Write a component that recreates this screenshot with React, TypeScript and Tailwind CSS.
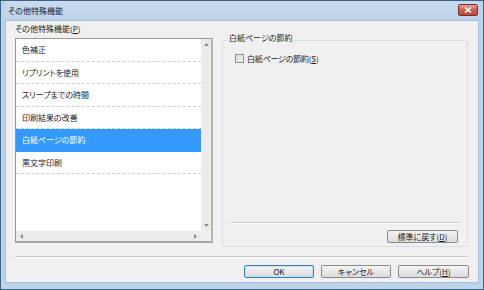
import React from 'react';

const jp = "font-['Meiryo_UI','Noto_Sans_CJK_JP',sans-serif] [font-feature-settings:'palt']";

const items = [
  { label: '色補正', h: 'h-[23px]' },
  { label: 'リプリントを使用', h: 'h-[22px]' },
  { label: 'スリープまでの時間', h: 'h-[23px]' },
  { label: '印刷結果の改善', h: 'h-[22px]' },
  { label: '白紙ページの節約', h: 'h-[23px]', selected: true },
  { label: '黒文字印刷', h: 'h-[22px]' },
];

const Btn: React.FC<{ children: React.ReactNode; primary?: boolean; className?: string }> = ({
  children,
  primary,
  className = '',
}) => (
  <button
    className={`h-[13px] w-[70px] rounded-[2px] border text-[8px] leading-none text-[#1a1a1a] bg-gradient-to-b from-[#f4f4f4] to-[#dcdcdc] ${
      primary ? 'border-[#3c7fb1] shadow-[inset_0_0_0_1px_#bde3f7]' : 'border-[#8a8a8a]'
    } ${className}`}
  >
    {children}
  </button>
);

export default function App() {
  return (
    <div className={`w-[484px] h-[290px] flex flex-col bg-[#bdd3ea] border border-[#3e6283] px-[4px] pb-[6px] ${jp}`}>
      {/* title bar */}
      <div className="h-[19px] flex items-center justify-between pl-[3px] bg-gradient-to-b from-[#c9dbee] to-[#bcd2ea]">
        <span className="text-[8px] leading-none text-[#1a1a1a]">その他特殊機能</span>
        <div className="w-[20px] h-[12px] mb-[2px] mr-[1px] rounded-[2px] border border-[#7a2c2c] bg-gradient-to-b from-[#e4a49a] via-[#c95b50] to-[#c24a3f] flex items-center justify-center">
          <svg width="8" height="6" viewBox="0 0 8 6">
            <path d="M1 0.5 L7 5.5 M7 0.5 L1 5.5" stroke="#ffffff" strokeWidth="1.6" />
          </svg>
        </div>
      </div>

      {/* client area */}
      <div className="flex-1 flex flex-col bg-[#f0f0f0] border border-[#a9c1da] px-[9px]">
        <div className="h-[226px] flex">
          {/* left column */}
          <div className="w-[198px] flex flex-col">
            <div className="h-[17px] pt-[3px] text-[8px] leading-[10px] text-[#1a1a1a]">
              その他特殊機能(<span className="underline">P</span>)
            </div>
            <div className="h-[205px] border border-[#9a9a9a] border-b-2 border-r-2 border-b-[#a6a6a6] border-r-[#b4b4b4] bg-white flex flex-col">
              <div className="flex-1 flex min-h-0">
                <div className="flex-1 flex flex-col">
                  {items.map((it) => (
                    <div
                      key={it.label}
                      className={`${it.h} flex items-center pl-[6px] text-[8px] leading-none border-b border-dashed ${
                        it.selected
                          ? 'bg-[#3399ff] text-white border-[#3399ff]'
                          : 'text-[#1a1a1a] border-[#cccccc]'
                      }`}
                    >
                      {it.label}
                    </div>
                  ))}
                </div>
                {/* vertical scrollbar */}
                <div className="w-[10px] bg-[#ebebeb] flex flex-col items-center justify-between py-[4px]">
                  <svg width="5" height="3" viewBox="0 0 5 3"><path d="M0 3 L2.5 0 L5 3Z" fill="#8a8a8a" /></svg>
                  <svg width="5" height="3" viewBox="0 0 5 3"><path d="M0 0 L2.5 3 L5 0Z" fill="#8a8a8a" /></svg>
                </div>
              </div>
              {/* horizontal scrollbar */}
              <div className="h-[10px] flex">
                <div className="flex-1 bg-[#ebebeb] flex items-center justify-between px-[4px]">
                  <svg width="3" height="5" viewBox="0 0 3 5"><path d="M3 0 L0 2.5 L3 5Z" fill="#8a8a8a" /></svg>
                  <svg width="3" height="5" viewBox="0 0 3 5"><path d="M0 0 L3 2.5 L0 5Z" fill="#8a8a8a" /></svg>
                </div>
                <div className="w-[10px] bg-[#f0f0f0]" />
              </div>
            </div>
          </div>

          {/* right group */}
          <div className="ml-[9px] mt-[19px] w-[246px] h-[207px] border border-[#d5dfe5] rounded-[3px] flex flex-col">
            <div className="-mt-[8px] ml-[5px] self-start px-[1px] bg-[#f0f0f0] text-[8px] leading-[10px] text-[#1a1a1a]">
              白紙ページの節約
            </div>
            <div className="mt-[11px] ml-[12px] flex items-center gap-[3px]">
              <div className="w-[9px] h-[9px] border border-[#8e8f8f] bg-gradient-to-br from-[#d8d8d8] to-[#f4f4f4]" />
              <span className="text-[8px] leading-none text-[#1a1a1a] tracking-[-0.2px]">
                白紙ページの節約(<span className="underline">S</span>)
              </span>
            </div>
            <div className="flex-1" />
            <div className="mx-[7px] h-[2px] border-t border-[#c9c9c9] border-b border-b-white" />
            <div className="flex justify-end pr-[9px] pt-[6px] pb-[3px]">
              <Btn className="w-[71px]">
                標準に戻す(<span className="underline">D</span>)
              </Btn>
            </div>
          </div>
        </div>

        <div className="mt-[9px] mr-[1px] h-[2px] border-t border-[#c9c9c9] border-b border-b-white" />
        <div className="mt-[7px] flex justify-end gap-[7px]">
          <Btn primary>OK</Btn>
          <Btn>キャンセル</Btn>
          <Btn className="w-[71px]">
            ヘルプ(<span className="underline">H</span>)
          </Btn>
        </div>
      </div>
    </div>
  );
}
